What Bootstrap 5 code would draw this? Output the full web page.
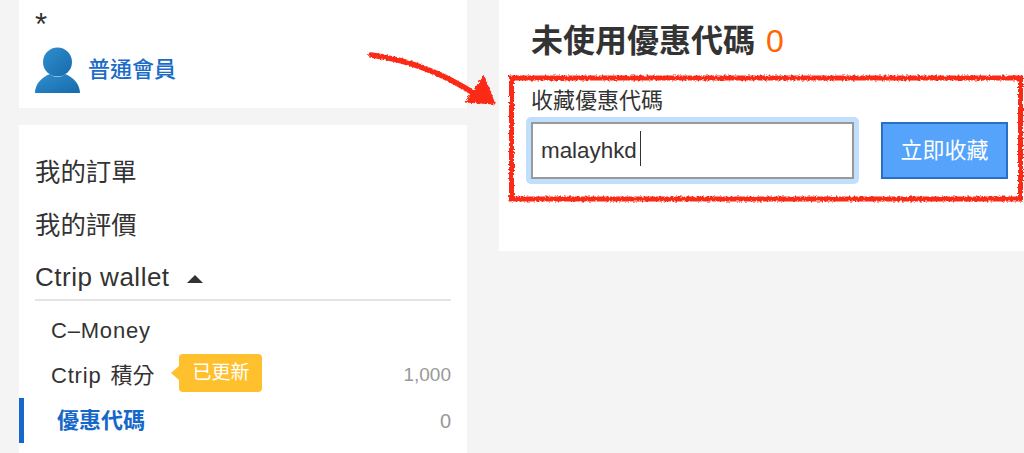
<!DOCTYPE html>
<html lang="zh-Hant">
<head>
  <meta charset="UTF-8" />
  <meta name="viewport" content="width=device-width, initial-scale=1.0"/>
  <title>優惠代碼</title>
  <link href="https://cdn.jsdelivr.net/npm/bootstrap@5.3.3/dist/css/bootstrap.min.css" rel="stylesheet">
  <style>
    html, body {
      height: 453px;
      overflow: hidden;
    }
    body {
      background-color: #f4f4f4;
      color: #333;
      font-family: "Liberation Sans", "Noto Sans CJK TC", sans-serif;
      position: relative;
    }
    .page-wrap {
      padding-left: 19px;
      gap: 32px;
    }
    .side-col {
      width: 448px;
      flex: none;
    }
    .user-box {
      height: 108px;
      padding: 0 16px;
      margin-bottom: 17px;
    }
    .star {
      font-size: 31px;
      line-height: 31px;
      height: 47px;
      padding-top: 9px;
    }
    .level-link {
      color: #1b6bc8;
      font-size: 22px;
      font-weight: 500;
      text-decoration: none;
      margin-left: 8px;
      padding-bottom: 2px;
    }
    .menu-box {
      height: 328px;
      padding: 21px 16px 0;
    }
    .menu-item {
      font-size: 25.4px;
      line-height: 53px;
      height: 53px;
    }
    .wallet-row {
      height: 49px;
      padding-top: 3px;
      font-size: 26px;
      letter-spacing: .5px;
      border-bottom: 2px solid #e4e4e4;
      margin-bottom: 7px;
    }
    .caret-up {
      width: 0;
      height: 0;
      border-left: 8px solid transparent;
      border-right: 8px solid transparent;
      border-bottom: 8px solid #333;
      margin-left: 17px;
      margin-top: 3px;
    }
    .sub-item {
      height: 45px;
      padding-left: 16px;
      font-size: 22px;
    }
    .latin-wide {
      letter-spacing: .8px;
      word-spacing: 2px;
    }
    .sub-count {
      color: #999;
      font-size: 19px;
    }
    .sub-active {
      margin-left: -16px;
      padding-left: 33px;
      border-left: 5px solid #1568c9;
      color: #1568c9;
      font-weight: 700;
    }
    .sub-active .sub-count {
      font-weight: 400;
      font-size: 20px;
    }
    .tip-new {
      position: relative;
      background-color: #ffc02e;
      color: #fff;
      font-size: 19px;
      line-height: 38px;
      height: 38px;
      padding: 0 13px;
      border-radius: 4px;
      margin-left: 25px;
      margin-bottom: 6px;
    }
    .tip-new::before {
      content: "";
      position: absolute;
      left: -8px;
      top: 12px;
      border-top: 7px solid transparent;
      border-bottom: 7px solid transparent;
      border-right: 8px solid #ffc02e;
    }
    .coupon-panel {
      height: 251px;
      padding: 20px 16px 0 32px;
    }
    .coupon-title {
      font-size: 32px;
      font-weight: 700;
      line-height: 42px;
      height: 42px;
      margin: 0 0 26px;
    }
    .coupon-count {
      color: #ff6600;
      font-weight: 400;
      margin-left: 11px;
    }
    .field-label {
      font-size: 22px;
      line-height: 26px;
      height: 34px;
      margin: 0;
      padding-top: 0;
    }
    .input-glow {
      position: relative;
      padding: 5px;
      margin: -5px 22px 0 -5px;
      background-color: #bfdffd;
      border-radius: 5px;
    }
    .code-input {
      width: 323px;
      height: 57px;
      border: 2px solid #999;
      border-radius: 0;
      font-size: 22.4px;
      padding: 4px 8px;
      color: #333;
    }
    .text-caret {
      position: absolute;
      left: 114px;
      top: 14px;
      width: 1px;
      height: 35px;
      background-color: #333;
    }
    .collect-btn {
      width: 127px;
      height: 57px;
      background-color: #55a3fb;
      border: 2px solid #2a6fc6;
      border-radius: 0;
      color: #fff;
      font-size: 22px;
      padding: 0;
    }
    .mark-layer {
      position: absolute;
      left: 0;
      top: 0;
      pointer-events: none;
    }
  </style>
</head>
<body>

<div class="d-flex page-wrap">
  <div class="side-col">
    <div class="bg-white user-box">
      <div class="star">*</div>
      <div class="d-flex align-items-center">
        <svg width="45" height="46" viewBox="0 0 45 46">
          <defs>
            <linearGradient id="userFill" x1="0" y1="0" x2="1" y2="1">
              <stop offset="0" stop-color="#2f8fd0"/>
              <stop offset="1" stop-color="#176aa9"/>
            </linearGradient>
          </defs>
          <circle cx="22.5" cy="15" r="14.5" fill="url(#userFill)"/>
          <path d="M0 46C0 37 7 30 15 27C19 31 26 31 30 27C38 30 45 37 45 46Z" fill="url(#userFill)"/>
        </svg>
        <a href="#" class="level-link">普通會員</a>
      </div>
    </div>

    <div class="bg-white menu-box">
      <div class="menu-item">我的訂單</div>
      <div class="menu-item">我的評價</div>
      <div class="wallet-row d-flex align-items-center">Ctrip wallet<span class="caret-up"></span></div>
      <div class="sub-item d-flex align-items-center"><span class="latin-wide">C–Money</span></div>
      <div class="sub-item d-flex align-items-center">
        <span><span class="latin-wide">Ctrip </span>積分</span>
        <span class="tip-new">已更新</span>
        <span class="sub-count ms-auto">1,000</span>
      </div>
      <div class="sub-item sub-active d-flex align-items-center">
        優惠代碼
        <span class="sub-count ms-auto">0</span>
      </div>
    </div>
  </div>

  <div class="bg-white flex-grow-1 coupon-panel">
    <h2 class="coupon-title">未使用優惠代碼<span class="coupon-count">0</span></h2>
    <label class="field-label d-block" for="couponCode">收藏優惠代碼</label>
    <div class="d-flex align-items-start">
      <div class="input-glow">
        <input type="text" id="couponCode" class="form-control code-input" value="malayhkd">
        <span class="text-caret"></span>
      </div>
      <button class="btn collect-btn">立即收藏</button>
    </div>
  </div>
</div>

<!-- hand drawn red marks on top of the screenshot -->
<svg class="mark-layer" width="1024" height="453" viewBox="0 0 1024 453">
  <defs>
    <filter id="rough" x="-5%" y="-5%" width="110%" height="110%">
      <feTurbulence type="fractalNoise" baseFrequency="0.45" numOctaves="2" seed="4"/>
      <feDisplacementMap in="SourceGraphic" scale="4"/>
    </filter>
  </defs>
  <g filter="url(#rough)" fill="none" stroke="#fb2a18">
    <rect x="511.5" y="78" width="509" height="121" stroke-width="5"/>
    <path d="M371 55C410 60 445 74 478 96" stroke-width="5.5" stroke-linecap="round"/>
    <path d="M484 76L465 102L495 104Z" fill="#fb2a18" stroke-width="1"/>
  </g>
</svg>

<script src="https://cdn.jsdelivr.net/npm/bootstrap@5.3.3/dist/js/bootstrap.bundle.min.js"></script>
</body>
</html>
